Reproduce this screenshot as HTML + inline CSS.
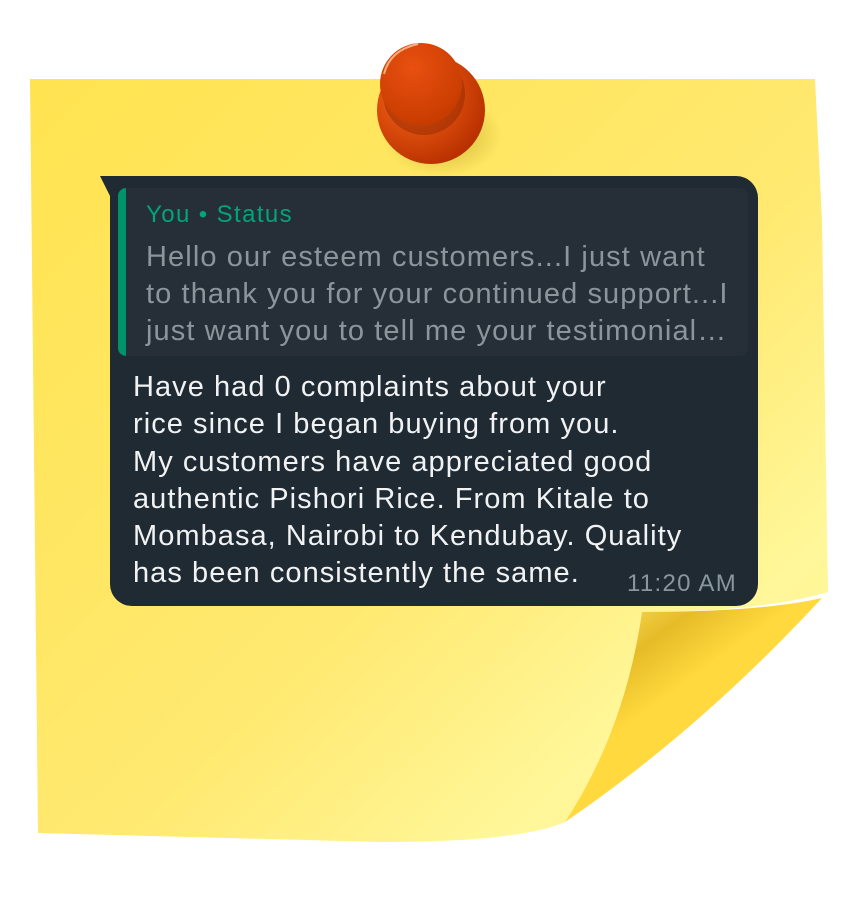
<!DOCTYPE html>
<html><head><style>
html,body{margin:0;padding:0;width:860px;height:908px;background:#fff;overflow:hidden;position:relative;font-family:"Liberation Sans",sans-serif}
.abs{position:absolute}
.bub{left:110px;top:176px;width:648px;height:430px;background:#1f2a33;border-radius:0 22px 22px 22px}
.quote{left:118px;top:188px;width:630px;height:168px;background:#262f37;border-radius:8px;overflow:hidden}
.bar{left:0;top:0;width:8px;height:168px;background:#00936a}
.l{white-space:nowrap;position:absolute}
</style></head><body>
<svg class="abs" style="left:0;top:0" width="860" height="908">
<defs>
<linearGradient id="pg" x1="0" y1="0" x2="1" y2="1">
<stop offset="0" stop-color="#ffe350"/><stop offset="0.55" stop-color="#ffe970"/><stop offset="0.8" stop-color="#fff79a"/><stop offset="1" stop-color="#fff08a"/></linearGradient>
<linearGradient id="cg" x1="0.2" y1="0.1" x2="0.45" y2="0.4">
<stop offset="0" stop-color="#f3d24a"/><stop offset="0.4" stop-color="#e6bb28"/><stop offset="1" stop-color="#ffd93d"/></linearGradient>
<radialGradient id="pin1" cx="0.35" cy="0.35" r="0.7"><stop offset="0" stop-color="#ff6a1a"/><stop offset="1" stop-color="#b83000"/></radialGradient>
<radialGradient id="pin2" cx="0.4" cy="0.3" r="0.7"><stop offset="0" stop-color="#e85010"/><stop offset="1" stop-color="#c83c00"/></radialGradient>
<radialGradient id="sh" cx="0.5" cy="0.5" r="0.5"><stop offset="0" stop-color="#a08a10" stop-opacity="0.55"/><stop offset="1" stop-color="#a08a10" stop-opacity="0"/></radialGradient>
</defs>
<path d="M30,79 L815,79 L822,220 L828,592 Q760,612 642,612 Q625,730 565,822 Q520,842 380,842 L38,833 Z" fill="url(#pg)"/>
<path d="M642,612 Q760,612 822,598 Q700,730 565,822 Q625,730 642,612 Z" fill="url(#cg)"/>
<ellipse cx="442" cy="135" rx="60" ry="42" fill="url(#sh)"/>
<circle cx="431" cy="110" r="54" fill="url(#pin1)"/>
<circle cx="424" cy="94" r="41" fill="#8a2500" opacity="0.45"/>
<circle cx="421" cy="84" r="41" fill="url(#pin2)"/>
<path d="M384,74 Q390,50 418,44" stroke="#ffc8a0" stroke-width="2" fill="none" opacity="0.8"/>
<path d="M100,176 L112,176 L112,200 Z" fill="#1f2a33"/>
</svg>
<div class="abs bub"></div>
<div class="abs quote"><div class="abs bar"></div></div>
<div class="l" style="left:146px;top:201px;font-size:24px;letter-spacing:1.4px;color:#00a57a">You • Status</div>
<div style="position:absolute;left:146px;top:239px;font-size:29px;line-height:37px;color:#8a959c;letter-spacing:1.1px">
<div style="white-space:nowrap">Hello our esteem customers...I just want</div>
<div style="white-space:nowrap">to thank you for your continued support...I</div>
<div style="white-space:nowrap">just want you to tell me your testimonial…</div>
</div>
<div style="position:absolute;left:133px;top:369px;font-size:29px;line-height:37.3px;color:#f0f2f3;letter-spacing:1.05px">
<div style="white-space:nowrap">Have had 0 complaints about your</div>
<div style="white-space:nowrap">rice since I began buying from you.</div>
<div style="white-space:nowrap">My customers have appreciated good</div>
<div style="white-space:nowrap">authentic Pishori Rice. From Kitale to</div>
<div style="white-space:nowrap">Mombasa, Nairobi to Kendubay. Quality</div>
<div style="white-space:nowrap">has been consistently the same.</div>
</div>
<div class="l" style="left:627px;top:570px;font-size:24px;letter-spacing:1.3px;color:#8a969d">11:20 AM</div>
</body></html>
